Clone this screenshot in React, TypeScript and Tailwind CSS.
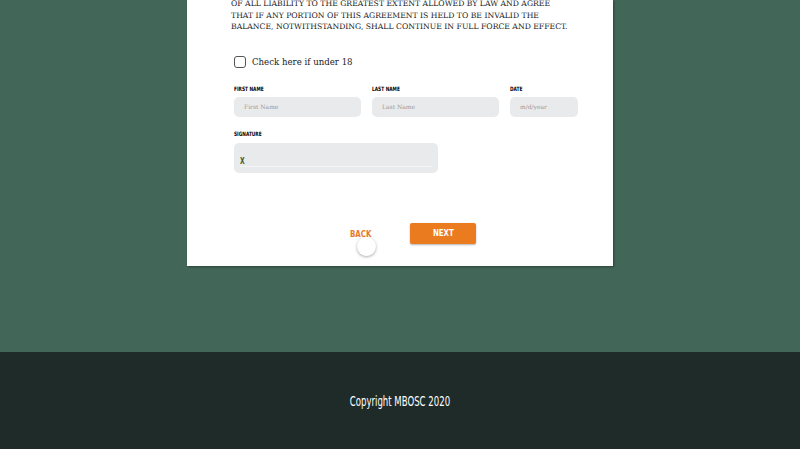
import React from 'react';

const slab = { fontFamily: '"DejaVu Serif", "Liberation Serif", serif' };
const cond = { fontFamily: '"DejaVu Sans", "Liberation Sans", sans-serif' };

function Field({ label, placeholder, width }: { label: string; placeholder: string; width: string }) {
  return (
    <div className={`flex flex-col ${width}`}>
      <div className="flex items-start h-[11px] leading-none">
        <span className="inline-block text-[6px] font-bold text-black scale-x-[0.72] origin-left" style={cond}>
          {label}
        </span>
      </div>
      <input
        type="text"
        placeholder={placeholder}
        className="h-[20px] rounded-[5px] bg-[#e9eaec] pl-[10px] text-[6px] outline-none placeholder:text-[#9a9a9a]"
        style={slab}
      />
    </div>
  );
}

export default function App() {
  return (
    <div className="min-h-[449px] flex flex-col bg-[#426658]">
      {/* Page body */}
      <div className="h-[352px] flex justify-center">
        <div className="relative w-[426px] h-[266px] bg-white shadow-[1px_1px_2px_rgba(0,0,0,0.35)] pl-[44px]">
          <p className="mt-[-2px] text-[7.7px] leading-[11.6px] text-[#222] uppercase whitespace-nowrap" style={slab}>
            Of all liability to the greatest extent allowed by law and agree
            <br />
            That if any portion of this agreement is held to be invalid the
            <br />
            Balance, notwithstanding, shall continue in full force and effect.
          </p>

          {/* Under 18 checkbox */}
          <label className="flex items-center gap-[6px] mt-[23px] ml-[3px]">
            <span className="w-[12px] h-[12px] rounded-[3px] border-[1.5px] border-[#555] bg-white" />
            <span className="text-[8.6px] text-[#222]" style={slab}>
              Check here if under 18
            </span>
          </label>

          {/* Names and date */}
          <div className="flex gap-[11px] mt-[17px] ml-[3px]">
            <Field label="FIRST NAME" placeholder="First Name" width="w-[127px]" />
            <Field label="LAST NAME" placeholder="Last Name" width="w-[127px]" />
            <Field label="DATE" placeholder="m/d/year" width="w-[68px]" />
          </div>

          {/* Signature */}
          <div className="flex flex-col mt-[14px] ml-[3px] w-[204px]">
            <div className="flex items-start h-[12px] leading-none">
              <span className="inline-block text-[6px] font-bold text-black scale-x-[0.72] origin-left" style={cond}>
                SIGNATURE
              </span>
            </div>
            <div className="h-[30px] rounded-[5px] bg-[#e9eaec] px-[6px] pt-[13px]">
              <div className="flex items-end border-b border-[#f4f4f5] h-[11px] leading-none">
                <span className="inline-block text-[8px] font-bold text-[#3d5a2c] scale-x-[0.75] origin-left" style={cond}>
                  X
                </span>
              </div>
            </div>
          </div>

          {/* Nav buttons */}
          <div className="flex items-center mt-[50px] ml-[119px]">
            <div className="relative w-[60px] h-[21px] flex items-center leading-none pt-[2px]">
              <span className="inline-block text-[9px] font-bold text-[#e8792a] scale-x-[0.78] origin-left" style={cond}>
                BACK
              </span>
              <span className="absolute left-[7px] top-[14px] w-[19px] h-[19px] rounded-full bg-white shadow-[0_1px_3px_rgba(0,0,0,0.35)]" />
            </div>
            <button className="w-[66px] h-[21px] flex items-center justify-center leading-none bg-[#ea7b1f] rounded-[2px] shadow-[0_1px_2px_rgba(0,0,0,0.3)]">
              <span className="inline-block text-white text-[9px] font-bold scale-x-[0.78]" style={cond}>
                NEXT
              </span>
            </button>
          </div>
        </div>
      </div>

      {/* Footer */}
      <footer className="h-[97px] bg-[#1f2b29] flex items-center justify-center">
        <span className="inline-block text-white text-[14.5px] pt-[2px] scale-x-[0.59]" style={cond}>
          Copyright MBOSC 2020
        </span>
      </footer>
    </div>
  );
}
